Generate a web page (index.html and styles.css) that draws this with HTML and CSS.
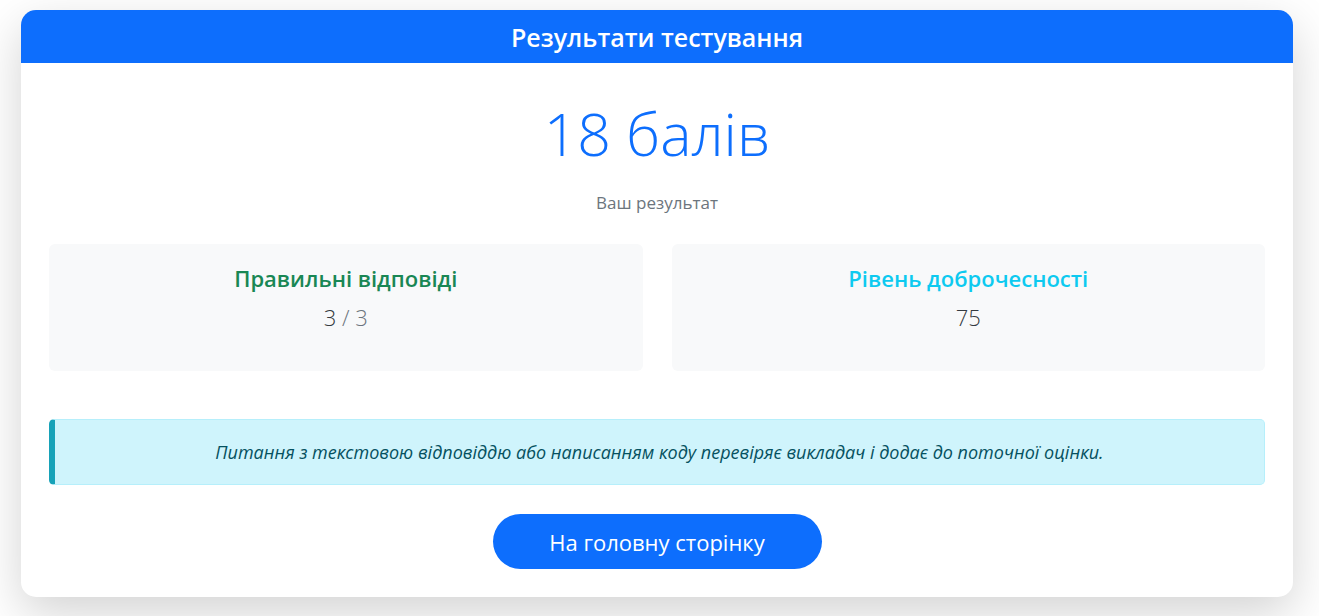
FILE: index.html
```html
<!DOCTYPE html>
<html lang="uk">
<head>
<meta charset="utf-8">
<title>Результати тестування</title>
<link rel="stylesheet" href="styles.css">
</head>
<body>
<div class="page">
  <section class="card">
    <header class="card-header">
      <h1 class="card-title">Результати тестування</h1>
    </header>
    <div class="card-body">
      <div class="score">18 балів</div>
      <p class="score-caption">Ваш результат</p>
      <div class="stats">
        <div class="stat">
          <h2 class="stat-title stat-title--success">Правильні відповіді</h2>
          <div class="stat-value">3 <span class="stat-total">/ 3</span></div>
        </div>
        <div class="stat">
          <h2 class="stat-title stat-title--info">Рівень доброчесності</h2>
          <div class="stat-value">75</div>
        </div>
      </div>
      <div class="notice">
        Питання з текстовою відповіддю або написанням коду перевіряє викладач і додає до поточної оцінки.
      </div>
      <div class="actions">
        <a class="btn-home" href="#">На головну сторінку</a>
      </div>
    </div>
  </section>
</div>
</body>
</html>
```

FILE: styles.css
```css
* {
  box-sizing: border-box;
}

html, body {
  margin: 0;
  background: #ffffff;
  font-family: "Open Sans", "Noto Sans", sans-serif;
  color: #212529;
}

.page {
  padding: 10px 26px 20px 21px;
}

.card {
  background: #fff;
  border-radius: 15px;
  overflow: hidden;
  box-shadow: 0 16px 48px rgba(0, 0, 0, 0.175);
}

.card-header {
  background: #0d6efd;
  height: 53px;
  display: flex;
  align-items: center;
  justify-content: center;
}

.card-title {
  margin: 0;
  color: #fff;
  font-size: 25px;
  font-weight: 600;
  line-height: 28px;
}

.card-body {
  padding: 33px 28px 28px;
  text-align: center;
}

.score {
  color: #0d6efd;
  font-size: 59px;
  font-weight: 300;
  line-height: 74px;
}

.score-caption {
  margin: 21px 0 0;
  color: #6c757d;
  font-size: 17px;
  line-height: 24px;
}

.stats {
  margin-top: 29px;
  display: grid;
  grid-template-columns: 1fr 1fr;
  gap: 29px;
}

.stat {
  background: #f8f9fa;
  border-radius: 6px;
  height: 127px;
  padding-top: 22px;
}

.stat-title {
  margin: 0;
  font-size: 22px;
  font-weight: 600;
  line-height: 24px;
}

.stat-title--success {
  color: #198754;
}

.stat-title--info {
  color: #0dcaf0;
}

.stat-value {
  margin-top: 14px;
  font-size: 22px;
  font-weight: 300;
  line-height: 26px;
  color: #343a40;
}

.stat-total {
  color: #6c757d;
}

.notice {
  margin-top: 48px;
  height: 66px;
  display: flex;
  align-items: center;
  justify-content: center;
  background: #cff4fc;
  border: 1px solid #b6effb;
  border-left: 6px solid #17a2b8;
  border-radius: 5px;
  color: #055160;
  font-style: italic;
  font-size: 18px;
}

.actions {
  margin-top: 29px;
  display: flex;
  justify-content: center;
}

.btn-home {
  display: inline-flex;
  align-items: center;
  justify-content: center;
  width: 329px;
  height: 55px;
  background: #0d6efd;
  color: #fff;
  border-radius: 28px;
  text-decoration: none;
  font-size: 22px;
}
```
